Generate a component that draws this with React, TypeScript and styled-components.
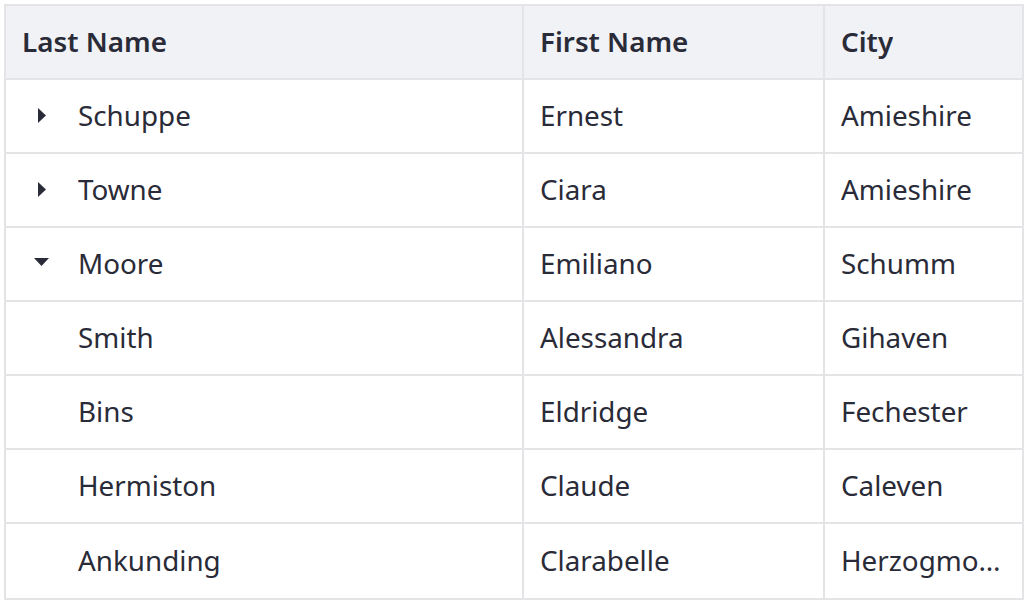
import React from "react";
import styled, { createGlobalStyle } from "styled-components";

const GlobalStyle = createGlobalStyle`
  html, body {
    margin: 0;
    padding: 0;
    background: #ffffff;
  }
  body {
    padding: 4px;
    font-family: "Noto Sans", "Open Sans", sans-serif;
    color: #2a2b38;
  }
`;

const BORDER = "#e4e4e7";

const Table = styled.div`
  display: grid;
  grid-template-columns: 518px 301px 197px;
  width: fit-content;
  border: 2px solid ${BORDER};
`;

const Row = styled.div`
  display: contents;
`;

const Cell = styled.div<{ $lastCol?: boolean; $lastRow?: boolean; $head?: boolean }>`
  box-sizing: border-box;
  height: 74px;
  display: flex;
  align-items: center;
  padding: 0 16px 2px 16px;
  min-width: 0;
  border-right: ${(p) => (p.$lastCol ? "none" : `2px solid ${BORDER}`)};
  border-bottom: ${(p) => (p.$lastRow ? "none" : `2px solid ${BORDER}`)};
  background: ${(p) => (p.$head ? "#f1f2f5" : "#ffffff")};
  font-size: 27.8px;
  font-weight: ${(p) => (p.$head ? 600 : 400)};
  color: #2a2b38;
`;

const Text = styled.span`
  display: block;
  min-width: 0;
  white-space: nowrap;
  overflow: hidden;
  text-overflow: ellipsis;
`;

const ExpanderSlot = styled.span`
  flex: none;
  width: 39px;
  margin-right: 17px;
  display: flex;
  align-items: center;
  justify-content: center;
  color: #2a2b38;
`;

type Expand = "closed" | "open" | "none";

const Caret: React.FC<{ state: Expand }> = ({ state }) => {
  if (state === "none") return null;
  if (state === "closed") {
    return (
      <svg width="8" height="15" viewBox="0 0 8 15" aria-hidden>
        <path d="M0 0 L8 7.5 L0 15 Z" fill="currentColor" />
      </svg>
    );
  }
  return (
    <svg width="15" height="8" viewBox="0 0 15 8" aria-hidden style={{ marginTop: -2 }}>
      <path d="M0 0 L15 0 L7.5 8 Z" fill="currentColor" />
    </svg>
  );
};

type Person = { last: string; first: string; city: string; expand: Expand };

const people: Person[] = [
  { last: "Schuppe", first: "Ernest", city: "Amieshire", expand: "closed" },
  { last: "Towne", first: "Ciara", city: "Amieshire", expand: "closed" },
  { last: "Moore", first: "Emiliano", city: "Schumm", expand: "open" },
  { last: "Smith", first: "Alessandra", city: "Gihaven", expand: "none" },
  { last: "Bins", first: "Eldridge", city: "Fechester", expand: "none" },
  { last: "Hermiston", first: "Claude", city: "Caleven", expand: "none" },
  { last: "Ankunding", first: "Clarabelle", city: "Herzogmouth", expand: "none" },
];

export default function App() {
  return (
    <>
      <GlobalStyle />
      <Table role="table">
        <Row role="row">
          <Cell $head role="columnheader">
            <Text>Last Name</Text>
          </Cell>
          <Cell $head role="columnheader">
            <Text>First Name</Text>
          </Cell>
          <Cell $head $lastCol role="columnheader">
            <Text>City</Text>
          </Cell>
        </Row>
        {people.map((p, i) => {
          const lastRow = i === people.length - 1;
          return (
            <Row role="row" key={p.last}>
              <Cell $lastRow={lastRow} role="cell">
                <ExpanderSlot>
                  <Caret state={p.expand} />
                </ExpanderSlot>
                <Text>{p.last}</Text>
              </Cell>
              <Cell $lastRow={lastRow} role="cell">
                <Text>{p.first}</Text>
              </Cell>
              <Cell $lastRow={lastRow} $lastCol role="cell">
                <Text>{p.city}</Text>
              </Cell>
            </Row>
          );
        })}
      </Table>
    </>
  );
}
